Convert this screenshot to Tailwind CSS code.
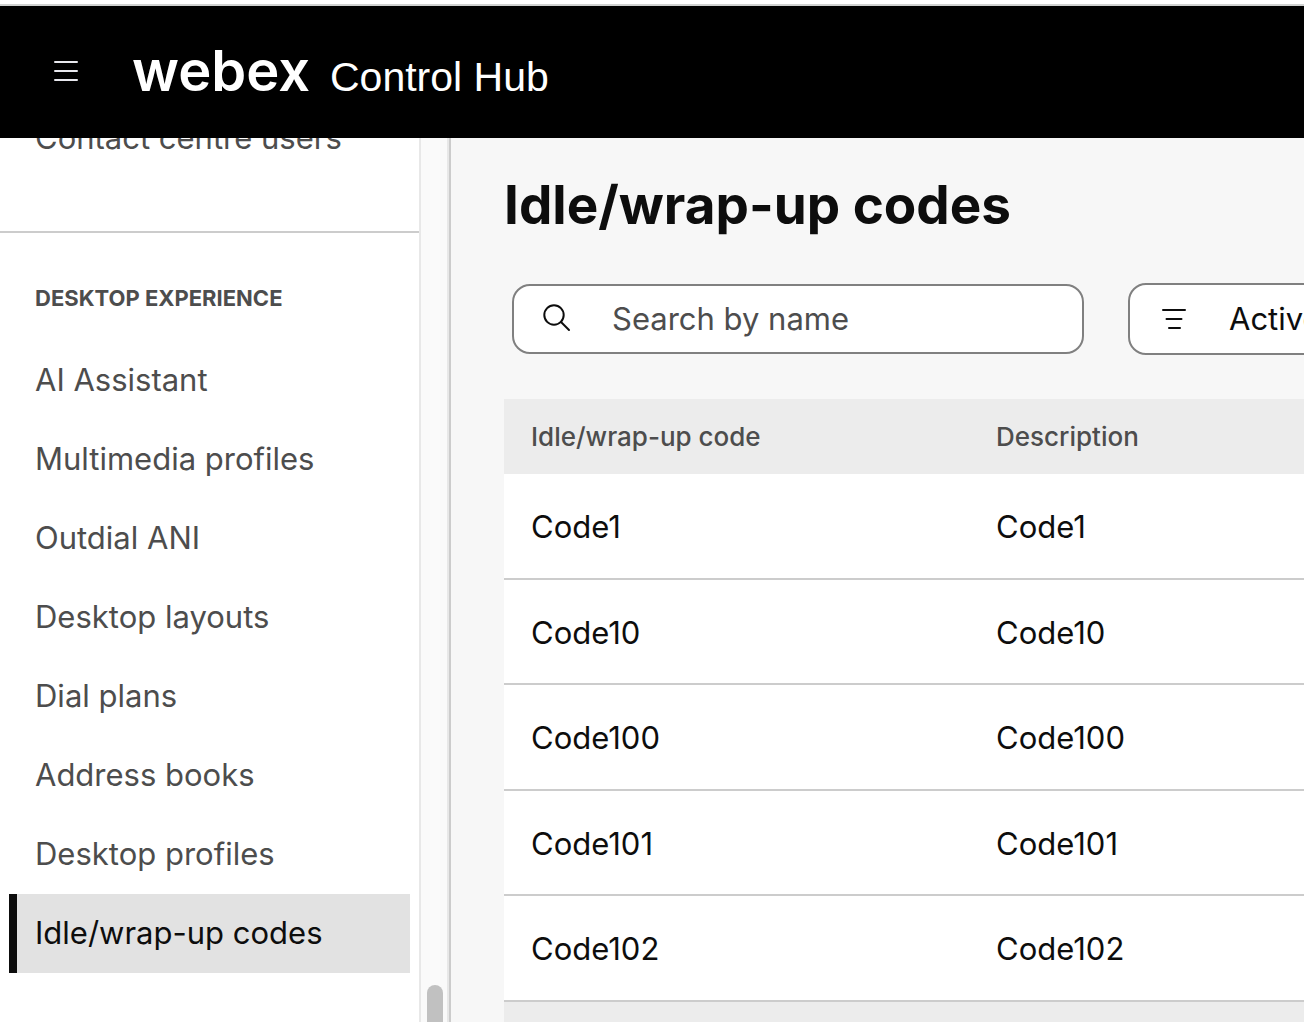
<!DOCTYPE html>
<html lang="en">
<head>
<meta charset="utf-8">
<title>Webex Control Hub</title>
<script src="https://cdn.jsdelivr.net/npm/@tailwindcss/browser@4"></script>
</head>
<body class="flex h-screen flex-col overflow-hidden bg-white pt-1 font-['Inter',sans-serif] text-[31px] leading-10 text-[#0d0d0d]">
  <header class="flex h-[134px] shrink-0 items-center border-t-2 border-[#d0d2d1] bg-black pl-[54px] text-white">
    <button type="button" aria-label="Menu" class="mr-[54px] mb-0.5 block">
      <svg class="block" width="24" height="22" viewBox="0 0 24 22" fill="none" stroke="#e8e8ee" stroke-width="2" stroke-linecap="round"><path d="M1 2h22M1 11h22M1 20h22"/></svg>
    </button>
    <a href="#" class="flex items-baseline gap-5 pt-1 whitespace-nowrap">
      <span class="text-[56px] leading-[66px] font-semibold">webex</span>
      <span class="font-['Liberation_Sans',sans-serif] text-[41px] leading-[66px]">Control Hub</span>
    </a>
  </header>

  <div class="flex min-h-0 flex-1">
    <aside class="flex w-[451px] shrink-0 overflow-hidden border-r-2 border-[#ccc]">
      <nav class="-mt-10 flex w-[419px] shrink-0 flex-col text-[#4d4d4d]">
        <a href="#" class="flex h-[79px] shrink-0 items-center pl-[35px]">Contact centre users</a>
        <hr class="mt-[54px] border-t-2 border-[#ccc]">
        <h2 class="mt-[49px] mb-[27px] pl-[35px] text-[22px] leading-8 font-bold">DESKTOP EXPERIENCE</h2>
        <ul>
          <li><a href="#" class="flex h-[79px] items-center pb-0.5 pl-[35px]">AI Assistant</a></li>
          <li><a href="#" class="flex h-[79px] items-center pb-0.5 pl-[35px]">Multimedia profiles</a></li>
          <li><a href="#" class="flex h-[79px] items-center pb-0.5 pl-[35px]">Outdial ANI</a></li>
          <li><a href="#" class="flex h-[79px] items-center pb-0.5 pl-[35px]">Desktop layouts</a></li>
          <li><a href="#" class="flex h-[79px] items-center pb-0.5 pl-[35px]">Dial plans</a></li>
          <li><a href="#" class="flex h-[79px] items-center pb-0.5 pl-[35px]">Address books</a></li>
          <li><a href="#" class="flex h-[79px] items-center pb-0.5 pl-[35px]">Desktop profiles</a></li>
          <li><a href="#" aria-current="page" class="mr-[9px] ml-[9px] flex h-[79px] items-center border-l-8 border-[#0d0d0d] bg-[#e2e2e2] pb-0.5 pl-[18px] text-[#0d0d0d]">Idle/wrap-up codes</a></li>
        </ul>
      </nav>
      <div class="flex flex-1 flex-col items-center justify-end overflow-hidden border-x-2 border-[#e8e8e8] bg-[#fafafa] pl-0.5">
        <div class="h-[37px] w-4 rounded-t-full bg-[#c1c1c1]"></div>
      </div>
    </aside>

    <main class="flex min-w-0 flex-1 flex-col overflow-hidden bg-[#f7f7f7] pl-[53px]">
      <h1 class="mt-[35px] text-[53px] leading-16 font-bold whitespace-nowrap">Idle/wrap-up codes</h1>
      <div class="mt-[46px] mb-11 ml-2 flex items-center gap-11">
        <label class="flex h-[70px] w-[572px] shrink-0 items-center rounded-[18px] border-2 border-[#808080] bg-white pl-7">
          <svg class="mb-0.5 shrink-0" width="30" height="30" viewBox="0 0 30 30" fill="none" stroke="#0d0d0d" stroke-width="2" stroke-linecap="round"><circle cx="12" cy="12" r="9.700"/><path d="M19 19l8 8"/></svg>
          <input type="search" aria-label="Search by name" placeholder="Search by name" class="ml-10 w-[400px] outline-none placeholder:text-[#4d4d4d]">
        </label>
        <button type="button" class="flex h-[72px] w-[400px] shrink-0 items-center rounded-[18px] border-2 border-[#808080] bg-white pl-8">
          <svg class="shrink-0" width="24" height="22" viewBox="0 0 24 22" fill="none" stroke="#0d0d0d" stroke-width="2" stroke-linecap="round"><path d="M1 2h22M4.500 11h15M7 20h11"/></svg>
          <span class="ml-[43px]">Active</span>
        </button>
      </div>
      <table class="w-full table-fixed border-separate border-spacing-0 text-left [&_td]:border-b-2 [&_td]:border-[#ccc] [&_td]:pt-0.5 [&_td]:pl-[27px]">
        <thead class="bg-[#ececec] text-[26px] text-[#4d4d4d]">
          <tr class="h-[75px]"><th scope="col" class="w-[465px] pl-[27px] font-medium">Idle/wrap-up code</th><th scope="col" class="pl-[27px] font-medium">Description</th></tr>
        </thead>
        <tbody class="bg-white">
          <tr class="h-[105px] odd:h-[106px]"><td>Code1</td><td>Code1</td></tr>
          <tr class="h-[105px] odd:h-[106px]"><td>Code10</td><td>Code10</td></tr>
          <tr class="h-[105px] odd:h-[106px]"><td>Code100</td><td>Code100</td></tr>
          <tr class="h-[105px] odd:h-[106px]"><td>Code101</td><td>Code101</td></tr>
          <tr class="h-[105px] odd:h-[106px]"><td>Code102</td><td>Code102</td></tr>
        </tbody>
      </table>
      <div class="flex-1 bg-[#ececec]"></div>
    </main>
  </div>
</body>
</html>
